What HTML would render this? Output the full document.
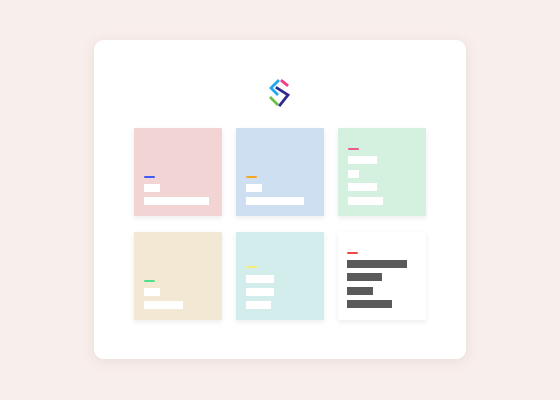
<html><head><style>
body{margin:0;width:560px;height:400px;background:#f8eeeb;position:relative;overflow:hidden}
.p{position:absolute;left:94px;top:40px;width:372px;height:319px;background:#fff;border-radius:10px;box-shadow:0 2px 12px rgba(200,170,160,.25)}
.c{position:absolute;width:88px;height:88px;box-shadow:0 2px 5px rgba(0,0,0,.08)}
.b{position:absolute;background:#fff;height:8px}
.a{position:absolute;height:2px;width:11px;border-radius:1px}
.d{position:absolute;background:#5a5a5a;height:8px}
</style></head><body>
<div class="p"></div>
<svg style="position:absolute;left:266px;top:78px" width="28" height="32" viewBox="0 0 28 32" fill="none" stroke-width="2.8" stroke-linecap="square">
<path d="M12 3 L5 10 L11 16" stroke="#1da8f0"/>
<path d="M16 3 L21 7" stroke="#ef3d8a"/>
<path d="M11 10 L22 17 L14 27" stroke="#2e2a8c"/>
<path d="M5 20 L11 26" stroke="#6cc04a"/>
</svg>
<div class="c" style="left:134px;top:128px;background:#f3d4d5"><div class="a" style="left:10px;top:48px;background:#3f5cf5"></div><div class="b" style="left:10px;top:56px;width:16px"></div><div class="b" style="left:10px;top:69px;width:65px"></div></div>
<div class="c" style="left:236px;top:128px;background:#cddff0"><div class="a" style="left:10px;top:48px;background:#f4a926"></div><div class="b" style="left:10px;top:56px;width:16px"></div><div class="b" style="left:10px;top:69px;width:58px"></div></div>
<div class="c" style="left:338px;top:128px;background:#d3f1de"><div class="a" style="left:10px;top:20px;background:#ef5a8c"></div><div class="b" style="left:10px;top:28px;width:29px"></div><div class="b" style="left:10px;top:42px;width:11px"></div><div class="b" style="left:10px;top:55px;width:29px"></div><div class="b" style="left:10px;top:69px;width:35px"></div></div>
<div class="c" style="left:134px;top:232px;background:#f3e8d3"><div class="a" style="left:10px;top:48px;background:#4fe08c"></div><div class="b" style="left:10px;top:56px;width:16px"></div><div class="b" style="left:10px;top:69px;width:39px"></div></div>
<div class="c" style="left:236px;top:232px;background:#d3ecec"><div class="a" style="left:10px;top:34px;background:#f6ec78"></div><div class="b" style="left:10px;top:43px;width:28px"></div><div class="b" style="left:10px;top:56px;width:28px"></div><div class="b" style="left:10px;top:69px;width:25px"></div></div>
<div class="c" style="left:338px;top:232px;background:#fff"><div class="a" style="left:9px;top:20px;background:#f44848"></div><div class="d" style="left:9px;top:28px;width:60px"></div><div class="d" style="left:9px;top:41px;width:35px"></div><div class="d" style="left:9px;top:55px;width:26px"></div><div class="d" style="left:9px;top:68px;width:45px"></div></div>
</body></html>
